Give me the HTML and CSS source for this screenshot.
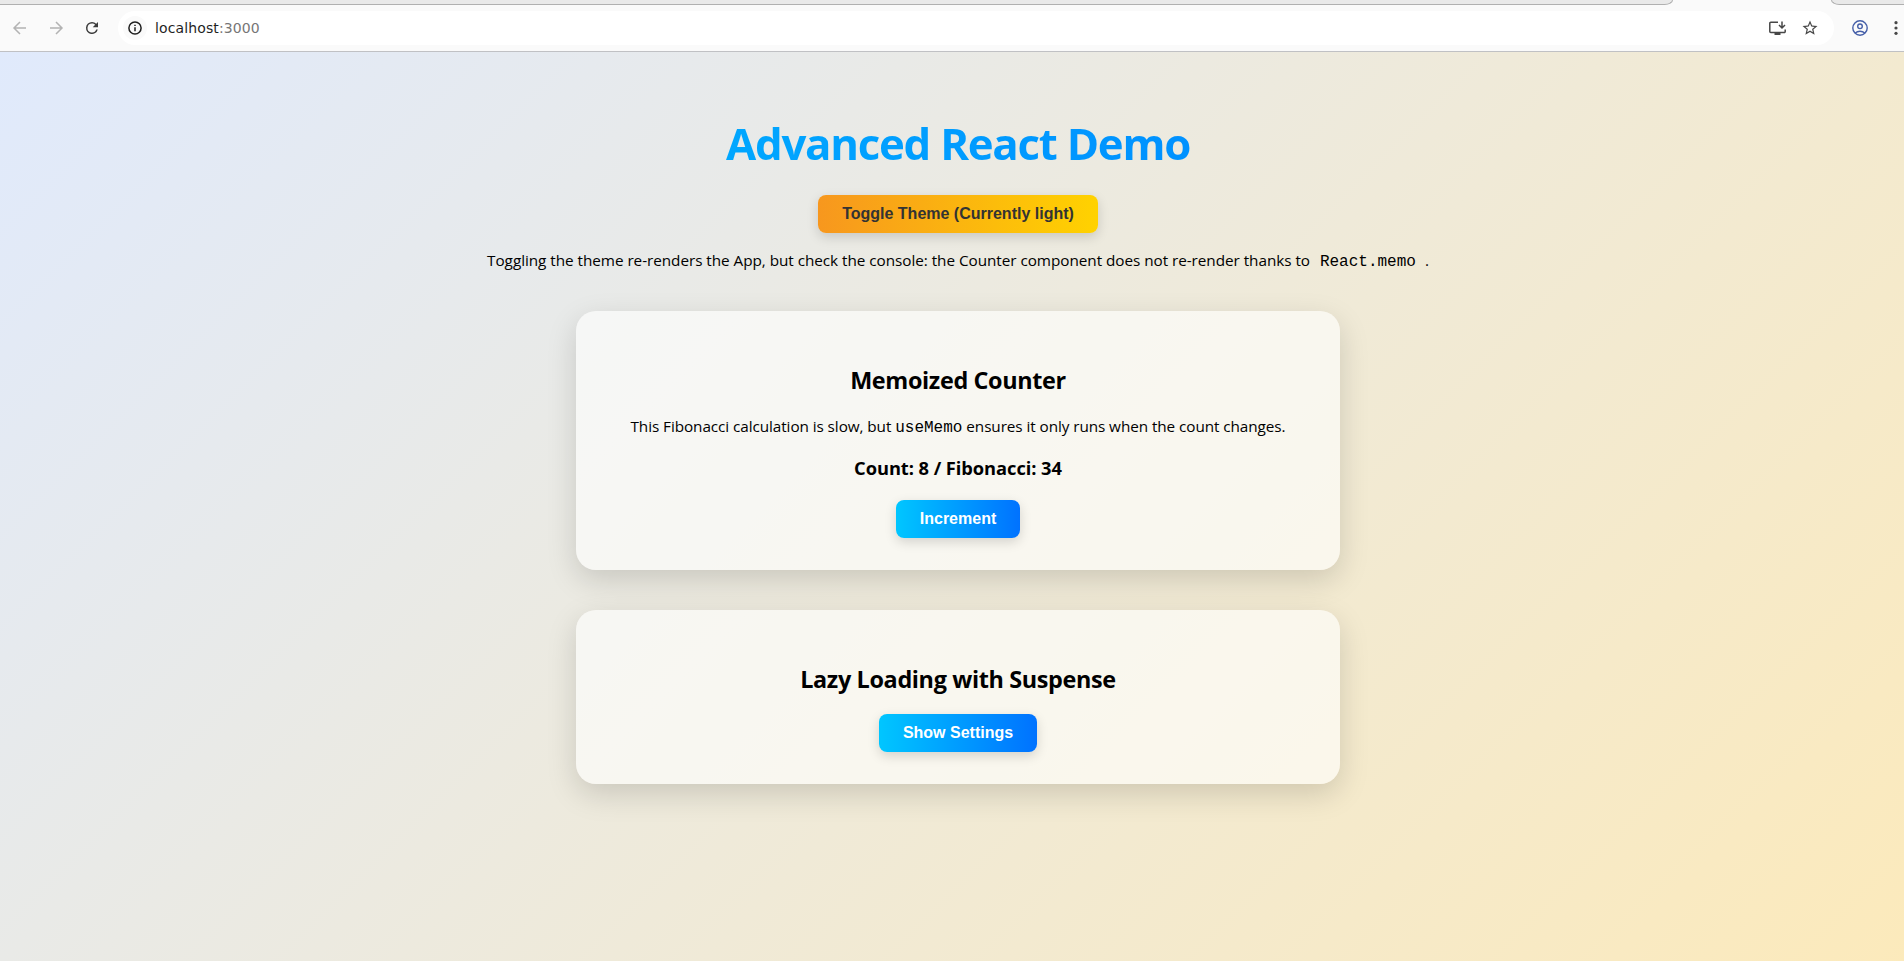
FILE: index.html
```html
<!DOCTYPE html>
<html lang="en">
<head>
<meta charset="utf-8">
<title>Advanced React Demo</title>
<link rel="stylesheet" href="styles.css">
</head>
<body>
<div class="window">
  <header class="browser">
    <div class="tabstrip"><div class="tabs-left"></div><div class="tab-active"></div><div class="tabs-right"></div></div>
    <div class="toolbar">
      <svg class="icon nav dim" viewBox="0 0 24 24"><path d="M12 4 4 12l8 8M4.500 12H20"/></svg>
      <svg class="icon nav dim" viewBox="0 0 24 24"><path d="m12 4 8 8-8 8M19.500 12H4"/></svg>
      <svg class="icon reload" viewBox="0 0 24 24"><path d="M17.650 6.350A7.958 7.958 0 0 0 12 4a8 8 0 1 0 7.730 10h-2.080A6 6 0 1 1 12 6c1.660 0 3.140.690 4.220 1.780L13 11h7V4z"/></svg>
      <div class="omnibox">
        <span class="site-info"><svg class="info" viewBox="0 0 14 14"><circle cx="7" cy="7" r="6.100"/><path d="M7 6.200v4M7 3.700v1.400"/></svg></span>
        <span class="url">localhost<span class="port">:3000</span></span>
        <svg class="install" viewBox="0 0 17 15"><path d="M9 1.300H1.800a1 1 0 0 0-1 1V10.500a1 1 0 0 0 1 1h13.400a1 1 0 0 0 1-1V8.500"/><path d="M13 .5v6M10 4 13 7 16 4"/><path class="solid" d="M5.500 11.500h6v2.500h-6z"/></svg>
        <svg class="star" viewBox="0 0 24 24"><path d="m22 9.240-7.190-.620L12 2 9.190 8.630 2 9.240l5.460 4.730L5.820 21 12 17.270 18.180 21l-1.630-7.030zM12 15.400l-3.760 2.270 1-4.280-3.320-2.880 4.380-.380L12 6.100l1.710 4.040 4.380.380-3.320 2.880 1 4.280z"/></svg>
      </div>
      <svg class="profile" viewBox="0 0 16 16"><circle cx="8" cy="8" r="7.200"/><circle cx="8" cy="6.300" r="2.300"/><path d="M3.200 13c2.600-2.300 7-2.300 9.600 0"/></svg>
      <svg class="more" viewBox="0 0 4 14"><circle cx="2" cy="1.700" r="1.600"/><circle cx="2" cy="7" r="1.600"/><circle cx="2" cy="12.300" r="1.600"/></svg>
    </div>
  </header>
  <main class="app">
    <h1 class="title">Advanced React Demo</h1>
    <button class="btn btn-theme">Toggle Theme (Currently light)</button>
    <p class="note">Toggling the theme re-renders the App, but check the console: the Counter component does not re-render thanks to <code class="pad">React.memo</code>.</p>
    <section class="card">
      <h2 class="heading">Memoized Counter</h2>
      <p class="text">This Fibonacci calculation is slow, but <code>useMemo</code> ensures it only runs when the count changes.</p>
      <h3 class="count">Count: 8 / Fibonacci: 34</h3>
      <button class="btn">Increment</button>
    </section>
    <section class="card">
      <h2 class="heading">Lazy Loading with Suspense</h2>
      <button class="btn">Show Settings</button>
    </section>
  </main>
</div>
</body>
</html>
```
FILE: styles.css
```css
* { box-sizing: border-box; }
body { margin: 0; height: 961px; overflow: hidden; font-family: "Open Sans", "Noto Sans", sans-serif; color: #000; }
.window { width: 1916px; height: 961px; display: flex; flex-direction: column; }

.browser { height: 52px; flex: none; background: #fafafa; border-bottom: 1px solid #c0c1c4; }
.tabstrip { display: flex; height: 5px; }
.tabs-left { width: 1673px; background: #e9e9e9; border-bottom: 1px solid #b0b0b0; border-bottom-right-radius: 10px 6px; border-right: 1px solid #b0b0b0; }
.tab-active { flex: 1; }
.tabs-right { width: 85px; background: #e9e9e9; border-bottom: 1px solid #b0b0b0; border-left: 1px solid #b0b0b0; border-bottom-left-radius: 10px 6px; }
.toolbar { display: flex; align-items: center; height: 46px; }
.icon { flex: none; width: 18px; height: 18px; }
.nav { fill: none; stroke-width: 2; margin: 0 18px 0 0; }
.nav:first-child { margin-left: 11px; }
.dim { stroke: #b3b3b3; }
.reload { fill: #3c3c3c; margin-right: 17px; }
.omnibox { display: flex; align-items: center; width: 1716px; height: 34px; border-radius: 17px; background: #fff; padding: 0 15px 0 5px; }
.site-info { display: flex; align-items: center; justify-content: center; width: 24px; height: 24px; border-radius: 50%; background: #fafafa; }
.info { width: 14px; height: 14px; fill: none; stroke: #1f1f1f; stroke-width: 1.500; }
.url { font: 14px "DejaVu Sans", sans-serif; letter-spacing: .12px; color: #1f1f1f; margin-left: 8px; flex: 1; }
.port { color: #767676; }
.install { width: 17px; height: 15px; fill: none; stroke: #474747; stroke-width: 1.500; margin-right: 15px; }
.solid { fill: #474747; stroke: none; }
.star { width: 18px; height: 18px; fill: #474747; }
.profile { width: 16px; height: 16px; fill: none; stroke: #455fa8; stroke-width: 1.400; margin-left: 18px; }
.more { width: 4px; height: 14px; fill: #474747; margin-left: 26px; }

.app { flex: 1; display: flex; flex-direction: column; align-items: center; text-align: center; background: linear-gradient(135deg, #e0eafc, #fceabb); }
.title { margin: 61px 0 21px; height: 61px; line-height: 61px; font-size: 43.800px; letter-spacing: -1.270px; width: 1836px; background: linear-gradient(90deg, #00c6ff, #0072ff); -webkit-background-clip: text; background-clip: text; color: transparent; }
.btn { height: 38px; padding: 10px 24px; border: 0; border-radius: 8px; font: bold 16px/18px "Liberation Sans", Arial, sans-serif; color: #fff; background: linear-gradient(90deg, #00c6ff, #0072ff); box-shadow: 0 4px 12px rgba(0, 0, 0, .15); }
.btn-theme { color: #333; background: linear-gradient(90deg, #f7971e, #ffd200); }
.note { margin: 16px 0 39px; font-size: 15.300px; letter-spacing: -.045px; line-height: 23px; height: 23px; white-space: nowrap; }
code { font: 16px/1 "Liberation Mono", monospace; letter-spacing: 0; }
.pad { padding: 0 9px 0 6px; }
.card { display: flex; flex-direction: column; align-items: center; width: 764px; padding: 53px 32px 32px; margin-bottom: 40px; border-radius: 20px; background: rgba(255, 255, 255, .6); box-shadow: 0 10px 30px rgba(0, 0, 0, .15); }
.heading { margin: 0 0 18px; font-size: 23.400px; letter-spacing: -.350px; line-height: 33px; white-space: nowrap; }
.text { margin: 0 0 18px; font-size: 15.300px; letter-spacing: -.075px; line-height: 22px; height: 22px; white-space: nowrap; }
.count { margin: 0 0 20px; font-size: 18.300px; letter-spacing: -.060px; line-height: 25px; white-space: nowrap; }
```
